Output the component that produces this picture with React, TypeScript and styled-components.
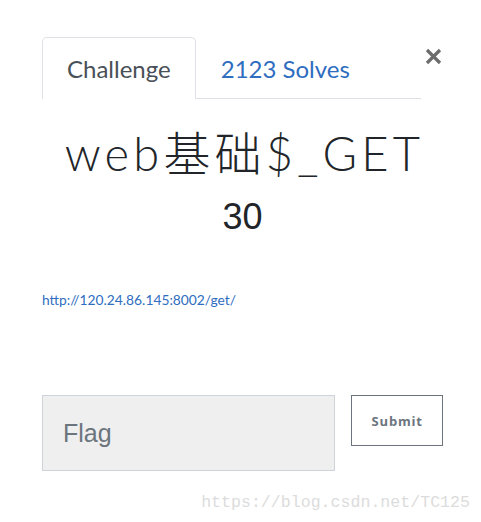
import React from "react";
import styled, { createGlobalStyle } from "styled-components";

const Global = createGlobalStyle`
  html, body { margin: 0; padding: 0; background: #ffffff; }
  body { font-family: "Lato", "Noto Sans CJK SC", sans-serif; }
`;

const Page = styled.div`
  position: relative;
  width: 481px;
  height: 522px;
  box-sizing: border-box;
  padding: 37px 38px 0 42px;
`;

const Header = styled.div`
  display: flex;
  align-items: flex-start;
`;

const Tabs = styled.div`
  display: flex;
  width: 381px;
  border-bottom: 1px solid #dee2e6;
`;

const Tab = styled.div<{ $active?: boolean }>`
  box-sizing: border-box;
  padding: 0 24px;
  display: flex;
  align-items: center;
  font-family: "Lato", sans-serif;
  font-size: 24px;
  color: ${(p) => (p.$active ? "#495057" : "#2e6dc0")};
  background: ${(p) => (p.$active ? "#fff" : "transparent")};
  border: 1px solid ${(p) => (p.$active ? "#dee2e6" : "transparent")};
  border-bottom: none;
  border-radius: 5px 5px 0 0;
  margin-bottom: ${(p) => (p.$active ? "-1px" : "0")};
  height: ${(p) => (p.$active ? "62px" : "61px")};
`;

const Close = styled.div`
  margin-left: 2px;
  margin-top: 9px;
  width: 20px;
  height: 20px;
  display: flex;
  align-items: center;
  justify-content: center;
`;

const Title = styled.h2`
  margin: 28px 0 0;
  padding-left: 4px;
  text-align: center;
  font-family: "Lato", "Noto Sans CJK SC", sans-serif;
  font-weight: 300;
  font-size: 47px;
  line-height: 53px;
  letter-spacing: 4.2px;
  color: #212529;
`;

const Value = styled.h3`
  margin: 15px 0 0;
  text-align: center;
  font-family: "Liberation Sans", sans-serif;
  font-weight: 400;
  font-size: 36px;
  line-height: 44px;
  color: #212529;
`;

const Link = styled.a`
  display: inline-block;
  margin-top: 52px;
  font-family: "Lato", sans-serif;
  font-size: 13.8px;
  color: #2e6dc0;
  text-decoration: none;
`;

const Form = styled.div`
  display: flex;
  align-items: flex-start;
  gap: 16px;
  margin-top: 87px;
`;

const FlagInput = styled.div`
  box-sizing: border-box;
  width: 294px;
  height: 76px;
  background: #efefef;
  border: 1px solid #ced4da;
  display: flex;
  align-items: center;
  padding: 0 20px;
  font-family: "Liberation Sans", sans-serif;
  font-size: 25px;
  color: #6c757d;
`;

const SubmitButton = styled.div`
  box-sizing: border-box;
  width: 92px;
  height: 51px;
  border: 1px solid #6c757d;
  background: #fff;
  display: flex;
  align-items: center;
  justify-content: center;
  font-family: "Open Sans", sans-serif;
  font-weight: 700;
  font-size: 13px;
  letter-spacing: 0.8px;
  color: #6c757d;
`;

const Watermark = styled.div`
  position: absolute;
  right: 11px;
  bottom: 10px;
  font-family: "Liberation Mono", "DejaVu Sans Mono", monospace;
  font-size: 16.6px;
  color: #dcdcdc;
`;

export default function App() {
  return (
    <>
      <Global />
      <Page>
        <Header>
          <Tabs>
            <Tab $active>Challenge</Tab>
            <Tab>2123 Solves</Tab>
          </Tabs>
          <Close>
            <svg width="17" height="17" viewBox="0 0 17 17">
              <path d="M2 2 L15 15 M15 2 L2 15" stroke="#6c6c6c" strokeWidth="3.2" strokeLinecap="butt" />
            </svg>
          </Close>
        </Header>
        <Title>web基础$_GET</Title>
        <Value>30</Value>
        <Link href="#">http://120.24.86.145:8002/get/</Link>
        <Form>
          <FlagInput>Flag</FlagInput>
          <SubmitButton>Submit</SubmitButton>
        </Form>
        <Watermark>https://blog.csdn.net/TC125</Watermark>
      </Page>
    </>
  );
}
